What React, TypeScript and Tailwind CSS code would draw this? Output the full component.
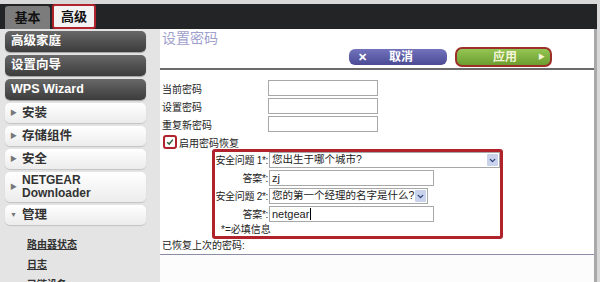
import { ChevronDown } from "lucide-react";

// NETGEAR 路由器 "设置密码" 页面截图复刻

const cjk = "font-['Liberation_Sans','Noto_Sans_CJK_SC',sans-serif]";

function DarkItem({ label }: { label: string }) {
  return (
    <div className="flex h-[21px] items-center rounded-[5px] bg-gradient-to-b from-[#686868] to-[#3c3c3c] pl-[6px] text-[12.5px] font-bold text-white shadow-[0_1px_1px_rgba(0,0,0,0.3)]">
      {label}
    </div>
  );
}

function LightItem({ label, open, tall }: { label: React.ReactNode; open?: boolean; tall?: boolean }) {
  return (
    <div
      className={`flex items-center rounded-[5px] bg-gradient-to-b from-white to-[#ececec] pl-[5px] text-[#333] shadow-[0_1px_1px_rgba(0,0,0,0.15)] ${
        tall ? "h-[30px]" : "h-[20px]"
      }`}
    >
      <span className="w-[12px] text-[7px] text-[#777]">{open ? "▼" : "▶"}</span>
      <span className={`font-bold ${tall ? "flex flex-col text-[12px] leading-[13px]" : "text-[12.5px] leading-[14px]"}`}>{label}</span>
    </div>
  );
}

function DropArrow() {
  return (
    <span className="flex h-[12px] w-[11px] shrink-0 items-center justify-center rounded-[1px] bg-[#c9d3ec]">
      <ChevronDown className="h-[9px] w-[9px] text-[#2d3f7a]" strokeWidth={3.5} />
    </span>
  );
}

function BoxLabel({ text }: { text: string }) {
  return (
    <span className="flex w-[53px] shrink-0 justify-end whitespace-nowrap text-[10px] tracking-[-0.3px]">
      {text}
    </span>
  );
}

export default function App() {
  return (
    <div className={`flex h-[282px] w-[600px] flex-col overflow-hidden bg-[#d9d9d9] ${cjk}`}>
      {/* Top bar with tabs */}
      <div className="mt-[4px] flex h-[28px] w-[597px] items-end bg-[#232425] pl-[5px]">
        <div className="flex h-[23px] w-[45px] items-center justify-center rounded-t-[3px] bg-[#7c7c7c] text-[13px] font-bold text-[#111]">
          基本
        </div>
        <div className="ml-[2px] flex h-[25px] w-[44px] items-center justify-center rounded-[3px] border-2 border-[#b0222c] bg-[#f3f3f3] text-[13px] font-bold text-[#111]">
          高级
        </div>
      </div>

      <div className="flex flex-1">
        {/* Sidebar */}
        <div className="flex w-[160px] flex-col gap-[3px] bg-[#e4e4e4] pl-[5px] pr-[14px] pt-[2px]">
          <DarkItem label="高级家庭" />
          <DarkItem label="设置向导" />
          <DarkItem label="WPS Wizard" />
          <LightItem label="安装" />
          <LightItem label="存储组件" />
          <LightItem label="安全" />
          <LightItem
            tall
            label={
              <>
                <span>NETGEAR</span>
                <span>Downloader</span>
              </>
            }
          />
          <LightItem label="管理" open />
          <div className="flex flex-col gap-[5px] pl-[22px] pt-[9px] text-[10px] font-bold text-[#333]">
            <span className="underline">路由器状态</span>
            <span className="underline">日志</span>
            <span className="underline">已链设备</span>
          </div>
        </div>

        {/* Main content */}
        <div className="flex w-[437px] flex-col border-r-[3px] border-[#a9a9a9] bg-white">
          <div className="h-[17px] pl-[2px] pt-[2px] text-[14px] leading-[14px] text-[#a0a0cc]">设置密码</div>
          <div className="flex h-[22px] items-center justify-end gap-[8px] pr-[42px]">
            <div className="flex h-[16px] w-[98px] items-center rounded-[6px] bg-gradient-to-b from-[#7373bd] to-[#4b4b94] pl-[9px] text-white">
              <span className="text-[11px] font-bold">✕</span>
              <span className="ml-[22px] text-[12px] font-bold">取消</span>
            </div>
            <div className="flex h-[20px] w-[97px] items-center rounded-[7px] border-2 border-[#9d2f2a] bg-gradient-to-b from-[#94c654] to-[#6c9d2f] pl-[36px] pr-[5px] text-[#f4f4d8]">
              <span className="text-[12px] font-bold">应用</span>
              <span className="ml-auto text-[7px]">▶</span>
            </div>
          </div>
          <div className="h-[2px] bg-[#6b6b6b]" />

          <div className="flex flex-col gap-[2px] pl-[2px] pt-[10px] text-[10px] text-[#222]">
            {["当前密码", "设置密码", "重复新密码"].map((l) => (
              <div key={l} className="flex h-[16px] items-center">
                <span className="w-[106px] pt-[2px]">{l}</span>
                <span className="h-[16px] w-[110px] border border-[#a8a8a8] bg-white" />
              </div>
            ))}
          </div>

          <div className="mt-[2px] flex h-[15px] items-center pl-[3px] text-[10px] text-[#222]">
            <span className="flex h-[14px] w-[14px] items-center justify-center rounded-[3px] border-2 border-[#b0222c] bg-white">
              <svg viewBox="0 0 10 10" className="h-[8px] w-[8px]">
                <path d="M1.5 5.2 L4 7.6 L8.6 2" fill="none" stroke="#2f5f3a" strokeWidth="1.8" />
              </svg>
            </span>
            <span className="ml-[2px] pt-[4px]">启用密码恢复</span>
          </div>

          <div className="ml-[52px] flex w-[291px] flex-col gap-[2px] rounded-[3px] border-[3px] border-[#b0222c] pb-[1px] text-[#222]">
            <div className="flex h-[16px] items-center">
              <BoxLabel text="安全问题 1*:" />
              <span className="ml-[1px] flex h-[16px] w-[232px] items-center justify-between border border-[#a8a8a8] pl-[2px] pr-[1px] text-[10.5px]">
                您出生于哪个城市?
                <DropArrow />
              </span>
            </div>
            <div className="flex h-[16px] items-center">
              <BoxLabel text="答案*:" />
              <span className="ml-[1px] flex h-[16px] w-[165px] items-center border border-[#a8a8a8] pl-[2px] text-[11px]">
                zj
              </span>
            </div>
            <div className="flex h-[16px] items-center">
              <BoxLabel text="安全问题 2*:" />
              <span className="ml-[1px] flex h-[16px] w-[159px] items-center justify-between whitespace-nowrap border border-[#a8a8a8] pl-[2px] pr-[1px] text-[10.5px]">
                您的第一个经理的名字是什么?
                <DropArrow />
              </span>
            </div>
            <div className="flex h-[16px] items-center">
              <BoxLabel text="答案*:" />
              <span className="ml-[1px] flex h-[16px] w-[165px] items-center border border-[#a8a8a8] pl-[2px] text-[11px]">
                netgear<span className="ml-[1px] h-[12px] w-px bg-black" />
              </span>
            </div>
            <div className="pl-[6px] text-[10px] leading-[11px]">*=必填信息</div>
          </div>

          <div className="h-[13px] pl-[2px] pt-[1px] text-[10px] leading-[12px] text-[#222]">已恢复上次的密码:</div>
          <div className="mt-[2px] h-px bg-[#8c8ca6]" />
          <div className="flex-1 bg-[#fcfcfc]" />
        </div>
      </div>
    </div>
  );
}
